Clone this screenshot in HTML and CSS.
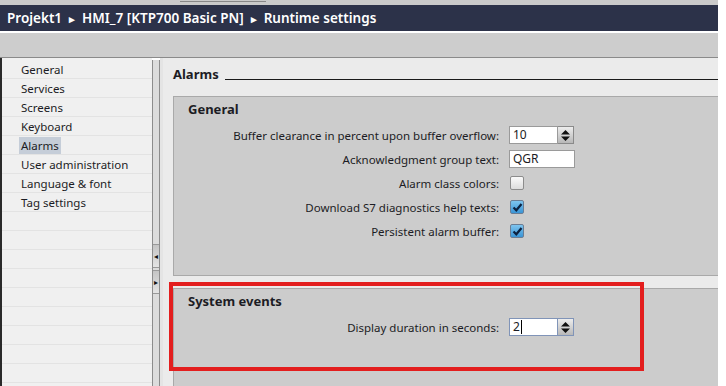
FILE: index.html
```html
<!DOCTYPE html>
<html lang="en">
<head>
    <meta charset="UTF-8">
    <title>Runtime settings</title>
    <link rel="stylesheet" href="styles.css">
</head>
<body>
    <div class="app">
        <div class="topstrip"><span class="scrollmark"></span></div>
        <div class="titlebar">
            <span>Projekt1</span>
            <span class="sep">&#9656;</span>
            <span>HMI_7 [KTP700 Basic PN]</span>
            <span class="sep">&#9656;</span>
            <span>Runtime settings</span>
        </div>
        <div class="toolbar"></div>

        <div class="main">
            <ul class="nav">
                <li><span>General</span></li>
                <li><span>Services</span></li>
                <li><span>Screens</span></li>
                <li><span>Keyboard</span></li>
                <li><span class="active">Alarms</span></li>
                <li><span>User administration</span></li>
                <li><span>Language &amp; font</span></li>
                <li><span>Tag settings</span></li>
                <li></li><li></li><li></li><li></li><li></li><li></li><li></li><li></li><li></li>
            </ul>

            <div class="splitter">
                <div class="split-btn">&#9666;</div>
                <div class="split-btn">&#9656;</div>
            </div>

            <div class="content">
                <div class="section-title">
                    <h2>Alarms</h2>
                    <div class="rule"></div>
                </div>

                <div class="group">
                    <h3>General</h3>
                    <div class="row">
                        <label>Buffer clearance in percent upon buffer overflow:</label>
                        <div class="spin">
                            <div class="field">10</div>
                            <div class="spin-btn">
                                <svg width="15" height="15" viewBox="0 0 15 15"><path d="M7.5 2 L12 6.5 L3 6.5 Z M3 8.5 L12 8.5 L7.5 13 Z" fill="#111"/></svg>
                            </div>
                        </div>
                    </div>
                    <div class="row">
                        <label>Acknowledgment group text:</label>
                        <div class="field wide">QGR</div>
                    </div>
                    <div class="row">
                        <label>Alarm class colors:</label>
                        <span class="check"></span>
                    </div>
                    <div class="row">
                        <label>Download S7 diagnostics help texts:</label>
                        <span class="check on">
                            <svg width="11" height="11" viewBox="0 0 11 11"><path d="M1.5 5.5 L4.3 8.3 L9.5 2" fill="none" stroke="#0d2240" stroke-width="2.2"/></svg>
                        </span>
                    </div>
                    <div class="row">
                        <label>Persistent alarm buffer:</label>
                        <span class="check on">
                            <svg width="11" height="11" viewBox="0 0 11 11"><path d="M1.5 5.5 L4.3 8.3 L9.5 2" fill="none" stroke="#0d2240" stroke-width="2.2"/></svg>
                        </span>
                    </div>
                </div>

                <div class="group last">
                    <h3>System events</h3>
                    <div class="row">
                        <label>Display duration in seconds:</label>
                        <div class="spin focus">
                            <div class="field">2<span class="caret"></span></div>
                            <div class="spin-btn">
                                <svg width="15" height="15" viewBox="0 0 15 15"><path d="M7.5 2 L12 6.5 L3 6.5 Z M3 8.5 L12 8.5 L7.5 13 Z" fill="#111"/></svg>
                            </div>
                        </div>
                    </div>
                </div>

                <div class="highlight"></div>
            </div>
        </div>
    </div>
</body>
</html>
```

FILE: styles.css
```css
body {
    margin: 0;
    background: #fff;
    font-family: "Noto Sans", "Open Sans", sans-serif;
    font-size: 11.5px;
    color: #1c1c24;
    overflow: hidden;
}
.app {
    width: 718px;
    height: 386px;
    display: flex;
    flex-direction: column;
}
.topstrip {
    height: 5px;
    background: #cacaca;
    position: relative;
}
.scrollmark {
    position: absolute;
    left: 180px;
    top: 1px;
    width: 86px;
    height: 1px;
    background: #888;
}
.titlebar {
    height: 26px;
    background: #2c3249;
    color: #fff;
    font-size: 13.5px;
    font-weight: 600;
    display: flex;
    align-items: center;
    gap: 6px;
    padding-left: 7px;
    border-bottom: 2px solid #fff;
}
.titlebar .sep {
    font-size: 11px;
    margin: 0 1px;
}
.toolbar {
    height: 24px;
    background: #cdcdcd;
    border-bottom: 1px solid #8a8a8a;
}
.main {
    flex: 1;
    display: flex;
    position: relative;
    overflow: hidden;
}
.nav {
    list-style: none;
    margin: 0;
    padding: 2px 0 0;
    width: 150px;
    background: #f0f0f0;
    border-left: 2px solid #2a2a2a;
}
.nav li {
    height: 18px;
    border-bottom: 1px solid #e3e3e3;
    padding-left: 17px;
    display: flex;
    align-items: center;
}
.nav span {
    padding: 1px 2px;
}
.nav .active {
    background: #c5cdd8;
}
.splitter {
    width: 6px;
    margin-top: 2px;
    background: #dcdcdc;
    border-left: 1px solid #8c8c8c;
    border-right: 1px solid #8c8c8c;
    display: flex;
    flex-direction: column;
    padding-top: 184px;
    gap: 2px;
}
.split-btn {
    height: 22px;
    font-size: 8px;
    line-height: 22px;
    text-align: center;
    color: #111;
    background: linear-gradient(#c4c4c4, #e4e4e4);
    border-top: 1px solid #999;
    border-bottom: 1px solid #999;
}
.content {
    flex: 1;
    background: #ebebeb;
    border-left: 3px solid #e4e4e4;
    padding-left: 10px;
    position: relative;
}
.section-title {
    display: flex;
    align-items: flex-end;
    height: 26px;
    margin-bottom: 12px;
}
.section-title h2 {
    margin: 0;
    font-size: 13px;
    font-weight: 700;
    line-height: 16px;
    padding-bottom: 2px;
}
.section-title .rule {
    flex: 1;
    margin-left: 6px;
    border-top: 1px solid #1a1a1a;
    margin-bottom: 4px;
}
.group {
    background: #cccccc;
    border-top: 1px solid #a9a9a9;
    border-left: 1px solid #a9a9a9;
    border-bottom: 1px solid #a9a9a9;
    padding: 4px 0 32px;
    margin-bottom: 12px;
}
.group.last {
    border-bottom: none;
    padding-bottom: 60px;
}
.group h3 {
    margin: 0 0 6px 14px;
    font-size: 13px;
    font-weight: 700;
    line-height: 16px;
}
.row {
    display: flex;
    align-items: center;
    height: 24px;
}
.row label {
    width: 325px;
    text-align: right;
    padding-right: 10px;
}
.spin {
    display: flex;
    height: 18px;
}
.field {
    width: 44px;
    height: 16px;
    background: #fff;
    border: 1px solid #9a9a9a;
    padding-left: 3px;
    line-height: 16px;
    font-size: 12px;
    display: flex;
    align-items: center;
}
.field.wide {
    width: 61px;
}
.spin-btn {
    width: 15px;
    height: 16px;
    border: 1px solid #8a8a8a;
    border-left: none;
    background: linear-gradient(#ededed, #b8b8b8);
    display: flex;
    align-items: center;
    justify-content: center;
}
.spin.focus .field,
.spin.focus .spin-btn {
    border-color: #8094b8;
}
.caret {
    display: inline-block;
    width: 1px;
    height: 14px;
    background: #000;
    margin-left: 1px;
}
.check {
    width: 12px;
    height: 12px;
    margin-left: 1px;
    border: 1px solid #8c8c8c;
    border-radius: 2px;
    background: linear-gradient(#fafafa, #dcdcdc);
    display: flex;
    align-items: center;
    justify-content: center;
}
.check.on {
    background: linear-gradient(#7ec4ee, #3a95d6);
    border-color: #6a7d94;
}
.highlight {
    position: absolute;
    left: 6px;
    top: 224px;
    width: 467px;
    height: 81px;
    border: 4px solid #e31e1e;
}
```
